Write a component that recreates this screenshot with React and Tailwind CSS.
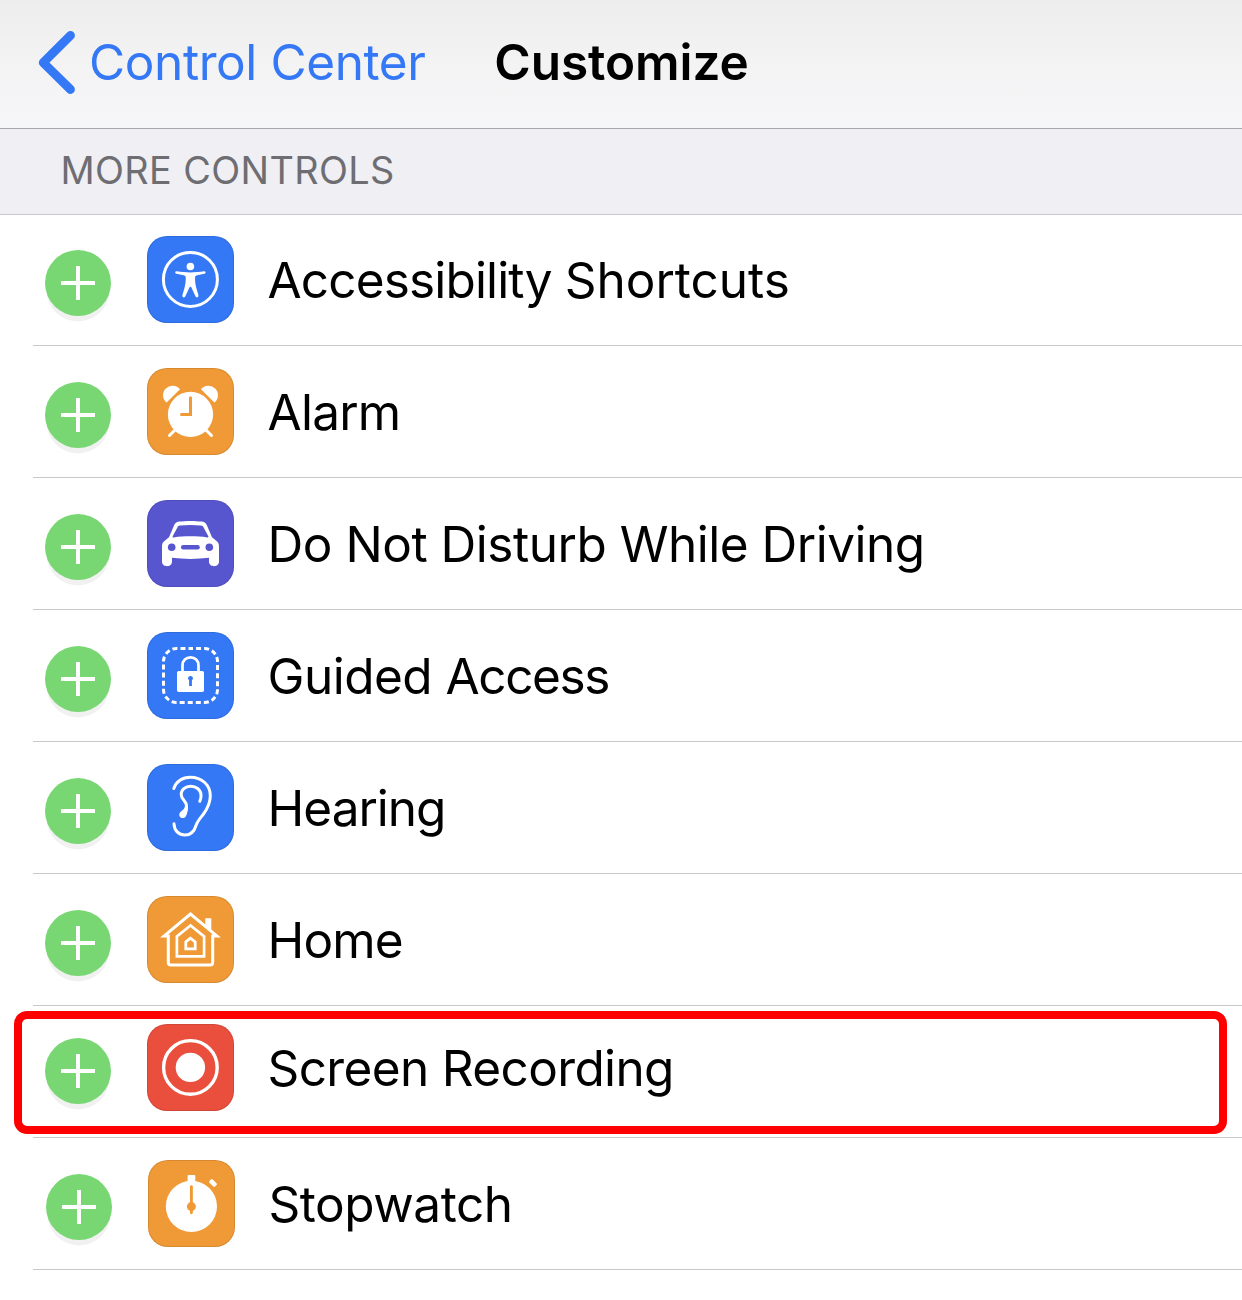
import React from "react";

const BLUE = "bg-[#3478f6]";
const ORANGE = "bg-[#ef9a36]";

function Svg({ children }) {
  return (
    <svg viewBox="0 0 87 87" className="block h-[87px] w-[87px]" fill="none" stroke="none">
      {children}
    </svg>
  );
}

function AccessibilityIcon() {
  return (
    <Svg>
      <circle cx="43.4" cy="43.4" r="27" stroke="#fff" strokeWidth="3" />
      <circle cx="43.4" cy="30.5" r="3.8" fill="#fff" />
      <path
        fill="#fff"
        d="M29.8 35.3 C34 36 39 36.5 43.4 36.5 C47.8 36.5 52.8 36 57 35.3 C58.9 35 59.2 37.3 57.4 37.7 L50.2 39.2 C49 39.5 48.2 40 48.1 40.9 C47.9 45 48.4 48 49.2 51.5 L51.3 58.8 C52 61.6 49.2 62.3 48.3 60.1 L44.3 51.3 C43.9 50.4 42.9 50.4 42.5 51.3 L38.5 60.1 C37.6 62.3 34.8 61.6 35.5 58.8 L37.6 51.5 C38.4 48 38.9 45 38.7 40.9 C38.6 40 37.8 39.5 36.6 39.2 L29.4 37.7 C27.6 37.3 27.9 35 29.8 35.3 Z"
      />
    </Svg>
  );
}

function AlarmIcon() {
  return (
    <Svg>
      <circle cx="43.5" cy="46.4" r="22.6" fill="#fff" />
      <path fill="#fff" d="M33 21.3 A9.5 9.5 0 1 0 19.6 34.6 Z" />
      <path fill="#fff" d="M54 21.3 A9.5 9.5 0 1 1 67.4 34.6 Z" />
      <path stroke="#fff" strokeWidth="3" strokeLinecap="round" d="M28.5 61.5 L22.5 67.5 M58.5 61.5 L64.5 67.5" />
      <path stroke="#ef9a36" strokeWidth="3" strokeLinecap="round" d="M43.5 29.8 V46.5 H34.5" />
      <path stroke="#ef9a36" strokeWidth="3" d="M43.5 40 V48" />
    </Svg>
  );
}

function CarIcon() {
  return (
    <Svg>
      <path
        fill="#fff"
        fillRule="evenodd"
        d="M26.8 26 C27.9 23.2 29.6 22 32.1 21.6 C39 20.7 48 20.7 54.9 21.6 C57.4 22 59.1 23.2 60.2 26 L65 37.3 L69.5 41 C71.3 42.4 72 44 72 46.5 V61.5 C72 64.5 69.8 66.2 67 66.2 C64.2 66.2 62 64.5 62 61.5 V57.8 C50 59.3 37 59.3 25 57.8 V61.5 C25 64.5 22.8 66.2 20 66.2 C17.2 66.2 15 64.5 15 61.5 V46.5 C15 44 15.7 42.4 17.5 41 L22 37.3 Z M33 25.6 C31.6 25.8 31 26.2 30.4 27.5 L25.8 36 C25.3 37.2 25.5 37.6 26.7 37.4 C37 36 50 36 60.3 37.4 C61.5 37.6 61.7 37.2 61.2 36 L56.6 27.5 C56 26.2 55.4 25.8 54 25.6 C47.5 24.7 39.5 24.7 33 25.6 Z"
      />
      <circle cx="24.7" cy="47.2" r="3.8" fill="#5856cf" />
      <circle cx="62.3" cy="47.2" r="3.8" fill="#5856cf" />
      <rect x="34" y="45" width="18.8" height="4.4" rx="2.2" fill="#5856cf" />
    </Svg>
  );
}

function GuidedAccessIcon() {
  return (
    <Svg>
      <path
        stroke="#fff"
        strokeWidth="3"
        strokeDasharray="5 3.07"
        strokeDashoffset="2.5"
        d="M43.5 16.5 H57.5 A13 13 0 0 1 70.5 29.5 V57.5 A13 13 0 0 1 57.5 70.5 H29.5 A13 13 0 0 1 16.5 57.5 V29.5 A13 13 0 0 1 29.5 16.5 H43.5"
      />
      <rect x="30" y="39" width="27" height="21" rx="1.8" fill="#fff" />
      <path stroke="#fff" strokeWidth="2.7" d="M35.5 40 V33.5 C35.5 28.5 39 25.4 43.5 25.4 C48 25.4 51.5 28.5 51.5 33.5 V40" />
      <circle cx="43.5" cy="46.3" r="2.4" fill="#3478f6" />
      <rect x="42.1" y="47" width="2.8" height="7" fill="#3478f6" />
    </Svg>
  );
}

function EarIcon() {
  return (
    <Svg>
      <g stroke="#fff" strokeWidth="3" strokeLinecap="round">
        <path d="M26.8 24.5 C29 17.5 35.5 13.3 43.2 13.3 C55 13.3 63.3 21 63.3 31.8 C63.3 38.5 60.5 44.5 56.5 50 C53 54.5 50.5 57 49 61.5 C47.2 67.5 43.5 71 38 71 C31.5 71 27.2 66.5 27 59.7" />
        <path d="M52.8 37.3 C53.8 35 54.2 32.5 54 30.5 C53.5 25.5 49 22.2 43.8 22.2 C38 22.2 34.2 26 34.2 30.5 C34.2 35.5 39.3 36.5 39.5 42 C39.6 45 39 47.5 38 50" />
      </g>
      <path fill="#fff" d="M38 42 L41 42 C41 46 40.3 50 38.7 52.5 C37.5 54.3 34.8 54.5 33.3 53.2 C31.8 51.8 31.9 49.5 33.5 47.9 C35.5 46 37.7 45.3 38 42 Z" />
    </Svg>
  );
}

function HomeIcon() {
  return (
    <Svg>
      <path fill="#fff" d="M58.3 22.3 H64.3 V36.5 L58.3 31 Z" />
      <path stroke="#fff" strokeWidth="3" d="M43.5 18 L17.2 39.9 H21.3 V66.5 Q21.3 69.1 24 69.1 H63 Q65.7 69.1 65.7 66.5 V39.9 H69.8 Z" />
      <path stroke="#fff" strokeWidth="2.7" d="M43.5 29.5 L29.9 40.4 V60.3 H57.1 V40.4 Z" />
      <path stroke="#fff" strokeWidth="2.8" d="M43.5 42.2 L38.8 46 V52.8 H48.2 V46 Z" />
    </Svg>
  );
}

function RecordIcon() {
  return (
    <Svg>
      <circle cx="43.4" cy="43.4" r="26.8" stroke="#fff" strokeWidth="3.4" />
      <circle cx="43.4" cy="43.4" r="14.7" fill="#fff" />
    </Svg>
  );
}

function StopwatchIcon() {
  return (
    <Svg>
      <circle cx="43.4" cy="46.4" r="25.6" fill="#fff" />
      <rect x="39.6" y="15" width="7.7" height="9" rx="1" fill="#fff" />
      <rect x="61" y="20.7" width="8" height="4.6" rx="1.3" fill="#fff" transform="rotate(45 65 23)" />
      <path stroke="#ef9a36" strokeWidth="2.9" strokeLinecap="round" d="M43.4 26.7 V52.7" />
      <circle cx="43.4" cy="46.6" r="4.5" fill="#ef9a36" />
    </Svg>
  );
}

const CONTROLS = [
  {
    id: "accessibility",
    label: (
      <>
        <span className="tracking-[-0.84px]">Accessibility </span>
        <span className="tracking-[-0.02px]">Shortcuts</span>
      </>
    ),
    tint: BLUE,
    Icon: AccessibilityIcon,
  },
  { id: "alarm", label: "Alarm", tint: ORANGE, Icon: AlarmIcon, tracking: "tracking-[-0.75px]" },
  { id: "driving", label: "Do Not Disturb While Driving", tint: "bg-[#5856cf]", Icon: CarIcon, tracking: "tracking-[-0.48px]" },
  {
    id: "guided-access",
    label: (
      <>
        <span className="tracking-[-0.5px]">Guided </span>
        <span className="tracking-[-1.4px]">Access</span>
      </>
    ),
    tint: BLUE,
    Icon: GuidedAccessIcon,
  },
  { id: "hearing", label: "Hearing", tint: BLUE, Icon: EarIcon, tracking: "tracking-[-1px]" },
  { id: "home", label: "Home", tint: ORANGE, Icon: HomeIcon, tracking: "tracking-[-0.83px]" },
  { id: "recording", label: "Screen Recording", tint: "bg-[#ea4e3d]", Icon: RecordIcon, tracking: "tracking-[-0.63px]", highlighted: true, shift: "-mt-1 mb-1" },
  { id: "stopwatch", label: "Stopwatch", tint: ORANGE, Icon: StopwatchIcon, tracking: "tracking-[-0.45px]", shift: "ml-px" },
];

function AddButton() {
  return (
    <button
      aria-label="Add"
      className="mt-[7px] flex size-[66px] shrink-0 items-center justify-center rounded-full bg-[#78d773] shadow-[0_7px_0_-1.5px_#f1f1f1]"
    >
      <svg viewBox="0 0 34 34" className="size-[34px]" fill="#fff">
        <path d="M15 0h4v15h15v4H19v15h-4V19H0v-4h15z" />
      </svg>
    </button>
  );
}

function ControlRow({ label, tint, Icon, tracking = "", highlighted, shift = "" }) {
  return (
    <li className="relative ml-[33px] flex h-[132px] items-center border-b border-[#c8c7cc] pl-3">
      <div className={`flex items-center ${shift}`}>
        <AddButton />
        <div className={`ml-9 size-[87px] shrink-0 overflow-hidden rounded-[20px] shadow-[inset_0_0_0_1px_rgba(0,0,0,0.1)] ${tint}`}>
          <Icon />
        </div>
        <span className={`ml-[33.5px] whitespace-nowrap text-[49.5px] leading-[60px] ${tracking}`}>{label}</span>
      </div>
      {highlighted && (
        <div className="pointer-events-none absolute top-[5px] right-[15px] -left-[19px] h-[123px] rounded-[13px] border-8 border-[#ff0000]" />
      )}
    </li>
  );
}

export default function App() {
  return (
    <div className="h-[1300px] w-[1242px] overflow-hidden bg-white font-['Inter',sans-serif] text-black">
      <header className="grid h-[129px] grid-cols-[1fr_auto_1fr] items-center border-b border-[#a7a7ab] bg-linear-to-b from-[#ededee] via-[#f3f3f4] to-[#f6f6f8] pb-1">
        <a className="flex items-center pl-[38px] text-[#3478f6]">
          <svg viewBox="0 0 38 64" className="h-16 w-[38px]" fill="none">
            <path d="M32.5 5.4 L5.2 32.6 L32.5 59.5" stroke="currentColor" strokeWidth="8.8" strokeLinecap="round" strokeLinejoin="round" />
          </svg>
          <span className="ml-[13px] whitespace-nowrap text-[49.5px] leading-[60px] tracking-[-0.4px]">Control Center</span>
        </a>
        <h1 className="pl-px text-[49.5px] leading-[60px] font-semibold tracking-[-0.05px]">Customize</h1>
        <span />
      </header>
      <h2 className="flex h-[86px] items-center border-b border-[#c8c7cc] bg-[#efeff4] pb-0.5 pl-[60.5px] text-[37.8px] tracking-[0.4px] text-[#6d6d72]">MORE CONTROLS</h2>
      <ul className="-mt-px">
        {CONTROLS.map(({ id, ...control }) => (
          <ControlRow key={id} {...control} />
        ))}
      </ul>
    </div>
  );
}
